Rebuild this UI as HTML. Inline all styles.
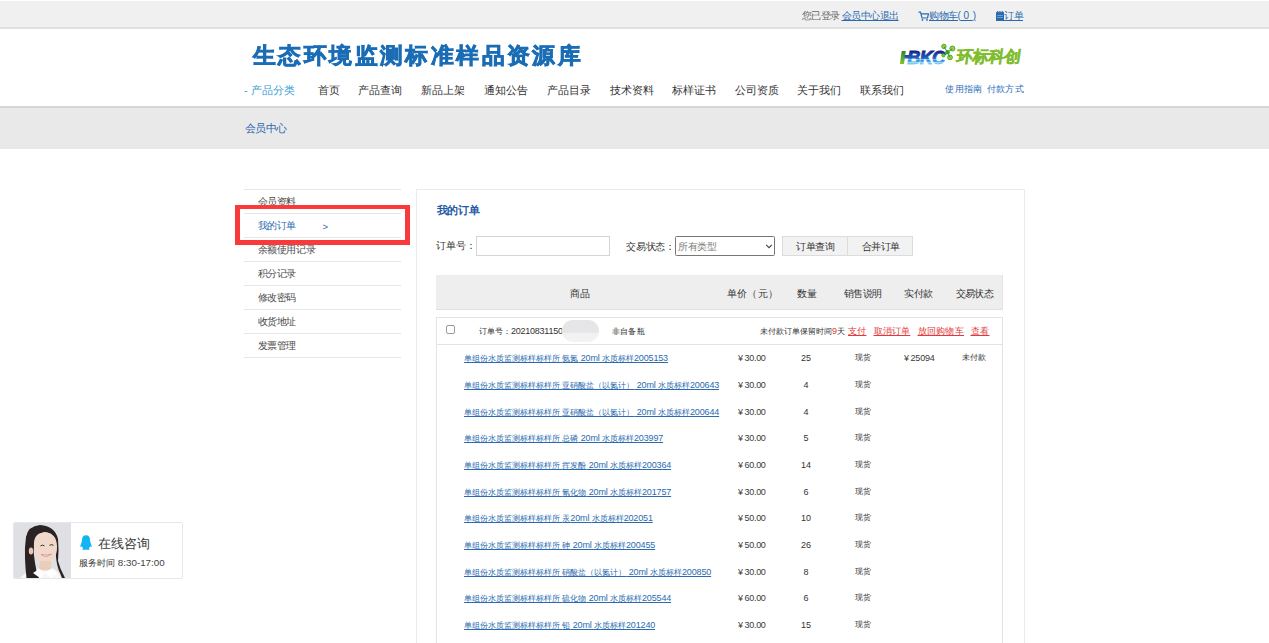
<!DOCTYPE html>
<html><head><meta charset="utf-8">
<style>
*{margin:0;padding:0;box-sizing:border-box}
html,body{width:1269px;height:643px;overflow:hidden;background:#fff;font-family:"Liberation Sans",sans-serif;color:#333}
.a{position:absolute;white-space:nowrap}
#top{position:absolute;left:0;top:1px;width:1269px;height:27.5px;background:#f0f0f0;border-bottom:2px solid #e0e0e0}
#hdr{position:absolute;left:0;top:28.5px;width:1269px;height:79px;background:#fff;border-bottom:2px solid #d6d6d6}
#crumb{position:absolute;left:0;top:107.5px;width:1269px;height:41px;background:#e9e9e9}
.tb{font-size:10px;line-height:12px;top:10px;letter-spacing:-0.5px}
.t10{font-size:10px;line-height:12px}
.t11{font-size:11px;line-height:13px}
.nav{font-size:11px;line-height:13px;color:#333;top:84px}
.blue{color:#2a6bb0}
.side{position:absolute;left:244px;width:157px;height:25px;border-bottom:1px solid #e6e6e6}
.st{position:absolute;left:257.5px;font-size:10px;line-height:12px;color:#4a4a4a;white-space:nowrap;letter-spacing:-0.35px}
.th{font-size:10px;line-height:12px;color:#333;top:288px;letter-spacing:-0.4px}
.it{font-size:8px;line-height:12px;color:#333}
.l{font-size:9px}
.lk{color:#2a6bb0;text-decoration:underline}
.lk .l{letter-spacing:-0.15px}
.ctr{text-align:center}
.pr{color:#3a3a3a}
.red{color:#e23a3a;text-decoration:underline}
</style></head><body>
<div id="top"></div>
<div class="a tb" style="left:801.5px;color:#666">您已登录</div><div class="a tb" style="left:841.5px;color:#2a6bb0;text-decoration:underline">会员中心退出</div>
<svg class="a" style="left:918px;top:11px" width="11" height="10" viewBox="0 0 11 10"><path d="M0.5 1.2 H2.5 L4 7 H9.5 L10.5 2.8 H3.2" fill="none" stroke="#2a6bb0" stroke-width="1.2"/><circle cx="4.5" cy="8.9" r="0.9" fill="#2a6bb0"/><circle cx="9" cy="8.9" r="0.9" fill="#2a6bb0"/></svg>
<div class="a tb" style="left:929px;color:#2a6bb0;text-decoration:underline">购物车(<span style="letter-spacing:0.4px"> 0 </span>)</div>
<svg class="a" style="left:996px;top:11px" width="8" height="10" viewBox="0 0 8 10"><rect x="0" y="1.2" width="8" height="8.8" fill="#2a6bb0"/><path d="M1.5 0 V2 M3.2 0 V2 M4.9 0 V2 M6.6 0 V2" stroke="#2a6bb0" stroke-width="0.9"/><path d="M1.2 4.5 H6.8 M1.2 6.5 H6.8" stroke="#8fb4dc" stroke-width="0.7"/></svg>
<div class="a tb" style="left:1004px;color:#2a6bb0;text-decoration:underline">订单</div>

<div id="hdr"></div>
<div class="a" style="left:253px;top:41.8px;font-size:24px;line-height:30px;font-weight:700;letter-spacing:3.3px;color:#1a6db5;-webkit-text-stroke:0.9px #1a6db5;transform:scale(0.93,0.9);transform-origin:0 0">生态环境监测标准样品资源库</div>

<!-- logo -->
<svg class="a" style="left:895px;top:40px" width="65" height="30" viewBox="0 0 65 30">
<defs><linearGradient id="bg1" x1="0" y1="11" x2="0" y2="24" gradientUnits="userSpaceOnUse"><stop offset="0" stop-color="#16237e"/><stop offset="0.45" stop-color="#1c55b5"/><stop offset="0.75" stop-color="#2c9ae0"/><stop offset="1" stop-color="#8ad0f5"/></linearGradient>
<linearGradient id="gg1" x1="0" y1="11" x2="0" y2="24" gradientUnits="userSpaceOnUse"><stop offset="0" stop-color="#2a8a2a"/><stop offset="1" stop-color="#86c232"/></linearGradient></defs>
<path d="M6.7 11 H10.8 L9 24 H4.9 Z" fill="url(#gg1)"/>
<path d="M9.8 14.9 H15 L14.5 18.4 H9.3 Z" fill="url(#bg1)"/>
<text x="12.3" y="24" font-family="Liberation Sans" font-weight="bold" font-style="italic" font-size="18.2" letter-spacing="-0.75" fill="url(#bg1)" stroke="url(#bg1)" stroke-width="0.9">BKC</text>
<path d="M10.5 19.4 H52 V20 H10.5 Z M10 22 H52 V22.5 H10 Z" fill="#ffffff" opacity="0.85"/>
<g stroke="#3c9e2e" stroke-width="0.9">
<circle cx="48.9" cy="6.4" r="2.2" fill="#a3cf3a"/>
<circle cx="57.4" cy="8.5" r="2.5" fill="#a3cf3a"/>
<circle cx="48.4" cy="15.4" r="1.6" fill="#a3cf3a"/>
<circle cx="55" cy="17.4" r="2.4" fill="#a3cf3a"/>
</g>
<circle cx="52.5" cy="12.3" r="2.3" fill="#3c9e2e"/>
<path d="M48.9 6.4 L52.5 12.3 L57.4 8.5 M48.4 15.4 L52.5 12.3 L55 17.4" stroke="#3c9e2e" stroke-width="1" fill="none"/>
</svg>
<div class="a" style="left:957px;top:45px;font-size:16.2px;line-height:22px;font-weight:700;color:#80bd2e;letter-spacing:0px;transform:skewX(-8deg);-webkit-text-stroke:0.35px #80bd2e">环标科创</div>

<div class="a nav" style="left:244px;color:#3aa0d5">- 产品分类</div>
<div class="a nav" style="left:318px">首页</div>
<div class="a nav" style="left:358px">产品查询</div>
<div class="a nav" style="left:421px">新品上架</div>
<div class="a nav" style="left:484px">通知公告</div>
<div class="a nav" style="left:547px">产品目录</div>
<div class="a nav" style="left:610px">技术资料</div>
<div class="a nav" style="left:672px">标样证书</div>
<div class="a nav" style="left:735px">公司资质</div>
<div class="a nav" style="left:797px">关于我们</div>
<div class="a nav" style="left:860px">联系我们</div>
<div class="a" style="left:945.3px;top:83px;font-size:9px;line-height:12px;letter-spacing:0.25px;color:#2d6dbb">使用指南</div>
<div class="a" style="left:986.8px;top:83px;font-size:9px;line-height:12px;letter-spacing:0.25px;color:#2d6dbb">付款方式</div>

<div id="crumb"></div>
<div class="a t11" style="left:245px;top:122px;letter-spacing:-0.55px;color:#2a66ad">会员中心</div>

<div class="side" style="top:189px;border-top:1px solid #e6e6e6;height:25px"></div>
<div class="side" style="top:213px"></div>
<div class="side" style="top:237px"></div>
<div class="side" style="top:261px"></div>
<div class="side" style="top:285px"></div>
<div class="side" style="top:309px"></div>
<div class="side" style="top:333px"></div>
<div class="st" style="top:196px">会员资料</div>
<div class="st" style="top:220px;color:#2a6bb0">我的订单</div>
<div class="a" style="left:322.5px;top:220.5px;font-size:9.5px;line-height:12px;color:#2a6bb0">&gt;</div>
<div class="st" style="top:244px">余额使用记录</div>
<div class="st" style="top:268px">积分记录</div>
<div class="st" style="top:292px">修改密码</div>
<div class="st" style="top:316px">收货地址</div>
<div class="st" style="top:340px">发票管理</div>
<div class="a" style="left:235px;top:205px;width:175px;height:40px;border-style:solid;border-color:#fa3a3a;border-width:4px 5px 5px 5px"></div>

<div class="a" style="left:416px;top:189px;width:609px;height:470px;border:1px solid #ebebeb"></div>
<div class="a" style="left:436.5px;top:203px;font-size:11px;line-height:14px;font-weight:bold;color:#1f5ba6;font-family:'Liberation Serif',serif;letter-spacing:-0.3px">我的订单</div>
<div class="a t10" style="left:436px;top:240px;color:#333">订单号：</div>
<div class="a" style="left:476px;top:236px;width:134px;height:20px;border:1px solid #d4d4d4"></div>
<div class="a t10" style="left:626px;top:240.5px;color:#333;letter-spacing:-0.2px">交易状态：</div>
<div class="a" style="left:675px;top:236px;width:100px;height:20px;border:1px solid #767676;border-radius:1.5px"></div>
<div class="a t10" style="left:678px;top:241px;color:#808080;letter-spacing:-0.5px">所有类型</div>
<svg class="a" style="left:765px;top:243px" width="8" height="6" viewBox="0 0 8 6"><path d="M1.2 1.8 L4 4.6 L6.8 1.8" fill="none" stroke="#444" stroke-width="1.15"/></svg>
<div class="a" style="left:782px;top:236px;width:66px;height:20px;border:1px solid #dcdcdc;background:#f2f2f2"></div>
<div class="a" style="left:847px;top:236px;width:66px;height:20px;border:1px solid #dcdcdc;background:#f2f2f2"></div>
<div class="a t10" style="left:796px;top:240.5px;color:#333;letter-spacing:-0.4px">订单查询</div>
<div class="a t10" style="left:861.5px;top:240.5px;color:#333;letter-spacing:-0.4px">合并订单</div>

<div class="a" style="left:436px;top:275px;width:567px;height:35px;background:#eeeeee;border-bottom:1px solid #e0e0e0;border-right:1px solid #e4e4e4"></div>
<div class="a th" style="left:570px">商品</div>
<div class="a th" style="left:727px;letter-spacing:0.2px">单价（元）</div>
<div class="a th" style="left:797px">数量</div>
<div class="a th" style="left:844px;letter-spacing:-0.75px">销售说明</div>
<div class="a th" style="left:904px">实付款</div>
<div class="a th" style="left:956px;letter-spacing:-0.8px">交易状态</div>

<div class="a" style="left:436px;top:317px;width:567px;height:400px;border:1px solid #e3e3e3"></div>
<div class="a" style="left:437px;top:344px;width:565px;height:1px;background:#e3e3e3"></div>
<div class="a" style="left:446px;top:325px;width:9px;height:9px;border:1px solid #9a9a9a;border-radius:2px;background:#fff"></div>
<div class="a it" style="left:479px;top:325px">订单号：<span class="l" style="letter-spacing:-0.25px">20210831150</span></div>
<div class="a" style="left:561.5px;top:320px;width:37.5px;height:22px;border-radius:12px;background:linear-gradient(#e5e5e7 0%,#e6e6e8 55%,#f1f1f2 62%,#f3f3f3 100%);filter:blur(0.7px)"></div>
<div class="a it" style="left:612px;top:326px;letter-spacing:0.2px">非自备瓶</div>
<div class="a it" style="left:760px;top:325px;font-size:8px;letter-spacing:0px">未付款订单保留时间<span class="l" style="color:#e23a3a;letter-spacing:0">9</span>天</div>
<div class="a it red" style="left:848px;top:325px;font-size:9px;letter-spacing:0.2px">支付</div>
<div class="a it red" style="left:873.5px;top:325px;font-size:9px;letter-spacing:0.2px">取消订单</div>
<div class="a it red" style="left:917.5px;top:325px;font-size:9px;letter-spacing:0.3px">放回购物车</div>
<div class="a it red" style="left:970.5px;top:325px;font-size:9px;letter-spacing:0.5px">查看</div>
<div class="a it lk" style="left:464px;top:352.4px">单组份水质监测标样标样所<span class="l"> </span>氨氮<span class="l"> 20ml </span>水质标样<span class="l">2005153</span></div>
<div class="a it l pr" style="left:738px;top:352.4px">¥<span style="margin-left:1.5px;letter-spacing:-0.3px">30.00</span></div>
<div class="a it l ctr" style="left:786px;width:40px;top:352.4px">25</div>
<div class="a it" style="left:855px;top:352.4px">现货</div>
<div class="a it l pr" style="left:904px;top:352.4px">¥<span style="margin-left:1.5px;letter-spacing:-0.2px">25094</span></div>
<div class="a it" style="left:962px;top:352.4px">未付款</div>
<div class="a it lk" style="left:464px;top:379.1px">单组份水质监测标样标样所<span class="l"> </span>亚硝酸盐（以氮计）<span class="l"> 20ml </span>水质标样<span class="l">200643</span></div>
<div class="a it l pr" style="left:738px;top:379.1px">¥<span style="margin-left:1.5px;letter-spacing:-0.3px">30.00</span></div>
<div class="a it l ctr" style="left:786px;width:40px;top:379.1px">4</div>
<div class="a it" style="left:855px;top:379.1px">现货</div>
<div class="a it lk" style="left:464px;top:405.7px">单组份水质监测标样标样所<span class="l"> </span>亚硝酸盐（以氮计）<span class="l"> 20ml </span>水质标样<span class="l">200644</span></div>
<div class="a it l pr" style="left:738px;top:405.7px">¥<span style="margin-left:1.5px;letter-spacing:-0.3px">30.00</span></div>
<div class="a it l ctr" style="left:786px;width:40px;top:405.7px">4</div>
<div class="a it" style="left:855px;top:405.7px">现货</div>
<div class="a it lk" style="left:464px;top:432.4px">单组份水质监测标样标样所<span class="l"> </span>总磷<span class="l"> 20ml </span>水质标样<span class="l">203997</span></div>
<div class="a it l pr" style="left:738px;top:432.4px">¥<span style="margin-left:1.5px;letter-spacing:-0.3px">30.00</span></div>
<div class="a it l ctr" style="left:786px;width:40px;top:432.4px">5</div>
<div class="a it" style="left:855px;top:432.4px">现货</div>
<div class="a it lk" style="left:464px;top:459.0px">单组份水质监测标样标样所<span class="l"> </span>挥发酚<span class="l"> 20ml </span>水质标样<span class="l">200364</span></div>
<div class="a it l pr" style="left:738px;top:459.0px">¥<span style="margin-left:1.5px;letter-spacing:-0.3px">60.00</span></div>
<div class="a it l ctr" style="left:786px;width:40px;top:459.0px">14</div>
<div class="a it" style="left:855px;top:459.0px">现货</div>
<div class="a it lk" style="left:464px;top:485.7px">单组份水质监测标样标样所<span class="l"> </span>氰化物<span class="l"> 20ml </span>水质标样<span class="l">201757</span></div>
<div class="a it l pr" style="left:738px;top:485.7px">¥<span style="margin-left:1.5px;letter-spacing:-0.3px">30.00</span></div>
<div class="a it l ctr" style="left:786px;width:40px;top:485.7px">6</div>
<div class="a it" style="left:855px;top:485.7px">现货</div>
<div class="a it lk" style="left:464px;top:512.4px">单组份水质监测标样标样所<span class="l"> </span>汞<span class="l">20ml </span>水质标样<span class="l">202051</span></div>
<div class="a it l pr" style="left:738px;top:512.4px">¥<span style="margin-left:1.5px;letter-spacing:-0.3px">50.00</span></div>
<div class="a it l ctr" style="left:786px;width:40px;top:512.4px">10</div>
<div class="a it" style="left:855px;top:512.4px">现货</div>
<div class="a it lk" style="left:464px;top:539.0px">单组份水质监测标样标样所<span class="l"> </span>砷<span class="l"> 20ml </span>水质标样<span class="l">200455</span></div>
<div class="a it l pr" style="left:738px;top:539.0px">¥<span style="margin-left:1.5px;letter-spacing:-0.3px">50.00</span></div>
<div class="a it l ctr" style="left:786px;width:40px;top:539.0px">26</div>
<div class="a it" style="left:855px;top:539.0px">现货</div>
<div class="a it lk" style="left:464px;top:565.7px">单组份水质监测标样标样所<span class="l"> </span>硝酸盐（以氮计）<span class="l"> 20ml </span>水质标样<span class="l">200850</span></div>
<div class="a it l pr" style="left:738px;top:565.7px">¥<span style="margin-left:1.5px;letter-spacing:-0.3px">30.00</span></div>
<div class="a it l ctr" style="left:786px;width:40px;top:565.7px">8</div>
<div class="a it" style="left:855px;top:565.7px">现货</div>
<div class="a it lk" style="left:464px;top:592.3px">单组份水质监测标样标样所<span class="l"> </span>硫化物<span class="l"> 20ml </span>水质标样<span class="l">205544</span></div>
<div class="a it l pr" style="left:738px;top:592.3px">¥<span style="margin-left:1.5px;letter-spacing:-0.3px">60.00</span></div>
<div class="a it l ctr" style="left:786px;width:40px;top:592.3px">6</div>
<div class="a it" style="left:855px;top:592.3px">现货</div>
<div class="a it lk" style="left:464px;top:619.0px">单组份水质监测标样标样所<span class="l"> </span>铅<span class="l"> 20ml </span>水质标样<span class="l">201240</span></div>
<div class="a it l pr" style="left:738px;top:619.0px">¥<span style="margin-left:1.5px;letter-spacing:-0.3px">30.00</span></div>
<div class="a it l ctr" style="left:786px;width:40px;top:619.0px">15</div>
<div class="a it" style="left:855px;top:619.0px">现货</div>

<div class="a" style="left:13px;top:522px;width:170px;height:57px;border:1px solid #e4e8ee;border-radius:2px;background:#fff"></div>
<svg class="a" style="left:14px;top:523px" width="57" height="55" viewBox="0 0 57 55">
<rect width="57" height="55" fill="#dfe0e4"/>
<path d="M6 55 Q10 50 17 48 L25 45 L38 45 Q44 47 47 55 Z" fill="#f7f7f7"/>
<path d="M26 2 Q14 3 12 14 Q10.5 24 11 36 Q11.5 47 12.5 55 L25 55 Q22 48 21 40 Q19 30 20 20 Q22 11 30 9 Q38 9 41 16 Q42 26 42 34 Q43 44 46 50 L48 55 L51 55 Q46 46 44 38 Q45 26 44 16 Q41 3 26 2 Z" fill="#2a2223"/>
<path d="M20 21 Q20 9.5 31 9.5 Q42.5 10 43 23 Q43.5 31 39 37 Q35 41 31 41 Q25 40.5 22 34 Q20 28 20 21 Z" fill="#f0d9cb"/>
<ellipse cx="17" cy="28" rx="2.2" ry="3.5" fill="#e8c8b5"/>
<path d="M26 38 L37 38 L37.5 46 Q31 49 25 46 Z" fill="#ebcdbb"/>
<path d="M25 46 L31 50 L26 55 L19 50 Z M37 46 L31 50 L37 55 L43 50 Z" fill="#ffffff"/>
<path d="M27 31.5 Q32 35.5 37.5 31 Q33 33 27 31.5 Z" fill="#fff" stroke="#d9928a" stroke-width="0.9"/>
<path d="M26.5 22.8 Q28.5 21.5 30.5 22.8 M35.5 22.3 Q37.5 21 39.5 22.3" stroke="#3d302c" stroke-width="1" fill="none"/>
</svg>
<svg class="a" style="left:80px;top:535px" width="12" height="15" viewBox="0 0 12 15"><path d="M6 0.3 Q10 0.3 10 5 Q10.3 7.5 11 9 Q12 11 11.6 12 Q10.8 12.2 10 11.2 Q9.6 12.8 8.8 13.6 Q10 14.2 9.6 14.8 H2.4 Q2 14.2 3.2 13.6 Q2.4 12.8 2 11.2 Q1.2 12.2 0.4 12 Q0 11 1 9 Q1.7 7.5 2 5 Q2 0.3 6 0.3 Z" fill="#12b4f3"/></svg>
<div class="a" style="left:97.5px;top:535.5px;font-size:13px;line-height:16px;color:#3a3a3a;letter-spacing:0px">在线咨询</div>
<div class="a" style="left:78.7px;top:557px;font-size:9px;line-height:12px;color:#333;letter-spacing:0.1px">服务时间<span style="font-size:9.8px;letter-spacing:0;color:#444"> 8:30-17:00</span></div>
</body></html>
